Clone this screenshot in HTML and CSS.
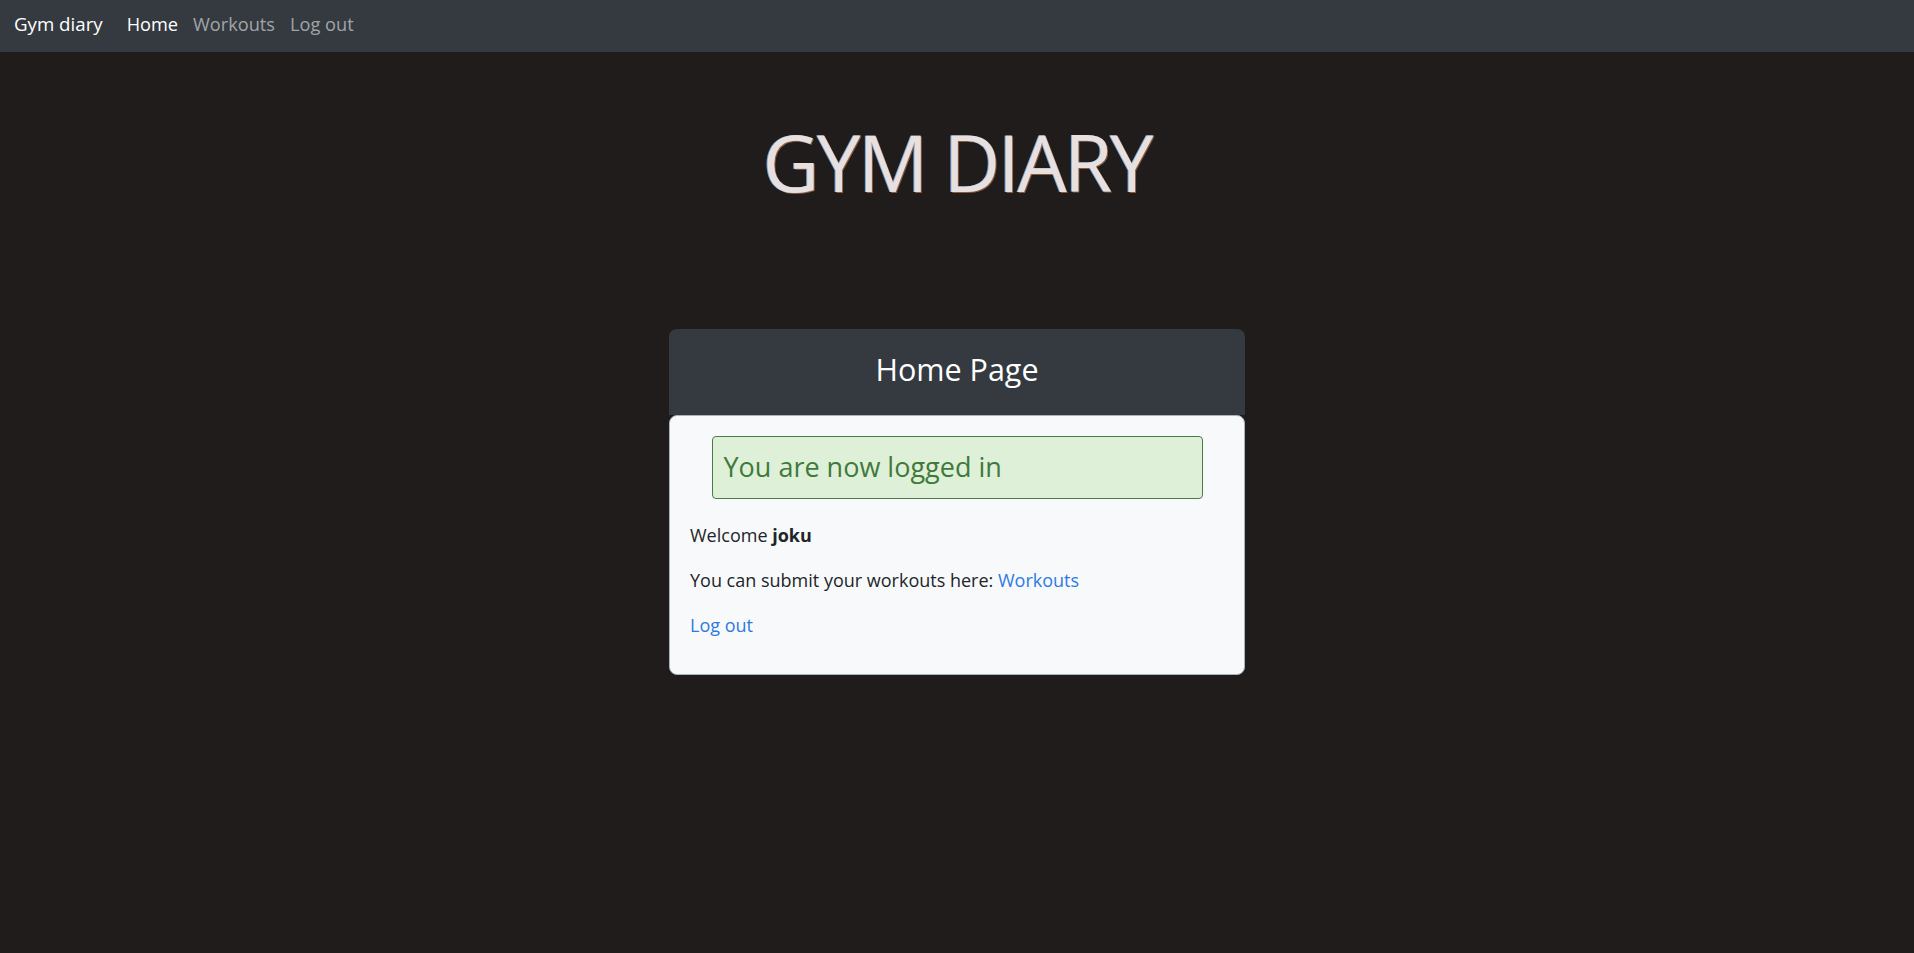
FILE: index.html
```html
<!DOCTYPE html>
<html lang="en">
<head>
<meta charset="utf-8">
<title>Gym diary</title>
<link rel="stylesheet" href="styles.css">
</head>
<body>
<nav class="navbar">
  <a class="brand" href="#">Gym diary</a>
  <div class="nav-links">
    <a class="nav-link active" href="#">Home</a>
    <a class="nav-link" href="#">Workouts</a>
    <a class="nav-link" href="#">Log out</a>
  </div>
</nav>
<main class="main">
  <h1 class="title">GYM DIARY</h1>
  <section class="card">
    <header class="card-header">
      <h2 class="card-title">Home Page</h2>
    </header>
    <div class="card-body">
      <div class="alert">You are now logged in</div>
      <p class="line">Welcome <strong>joku</strong></p>
      <p class="line">You can submit your workouts here: <a href="#" class="link">Workouts</a></p>
      <p class="line"><a href="#" class="link">Log out</a></p>
    </div>
  </section>
</main>
</body>
</html>
```

FILE: styles.css
```css
* { box-sizing: border-box; }
html, body { margin: 0; padding: 0; }
body {
  background: #201c1b;
  font-family: "Open Sans", "Noto Sans", sans-serif;
  color: #212529;
  min-height: 953px;
}
a { text-decoration: none; }

.navbar {
  height: 52px;
  background: #343a40;
  display: flex;
  align-items: center;
  padding: 0 14px 5px;
}
.brand {
  color: #fff;
  font-size: 18.7px;
  margin-right: 24px;
}
.nav-links { display: flex; gap: 15px; }
.nav-link {
  color: rgba(255,255,255,0.55);
  font-size: 18.2px;
}
.nav-link.active { color: #fff; }

.main {
  display: flex;
  flex-direction: column;
  align-items: center;
}
.title {
  margin: 60px 0 0;
  font-size: 78px;
  font-weight: 400;
  line-height: 100px;
  height: 108px;
  color: #e8dfdf;
  text-shadow: -1px 0 0 #6aa0d8, 1px 1px 0 #8a5a3c;
  letter-spacing: -2.4px;
}
.card {
  margin-top: 109px;
  width: 576px;
  display: flex;
  flex-direction: column;
}
.card-header {
  background: #343a40;
  height: 86px;
  border-radius: 8px 8px 0 0;
  display: flex;
  align-items: center;
  justify-content: center;
}
.card-title {
  margin: 0;
  font-size: 30.5px;
  font-weight: 400;
  color: #fff;
  padding-bottom: 6px;
}
.card-body {
  background: #f8f9fa;
  border: 1px solid #aab2bb;
  border-radius: 8px;
  padding: 20px 20px 26px;
  display: flex;
  flex-direction: column;
}
.alert {
  align-self: center;
  width: 491px;
  height: 63px;
  margin: 0 0 14px;
  background: #dff0d8;
  border: 1px solid #4b7a48;
  border-radius: 4px;
  color: #3f7a3c;
  font-size: 27px;
  display: flex;
  align-items: center;
  padding: 0 11px 3px;
}
.line {
  margin: 0;
  font-size: 18px;
  line-height: 45px;
}
.line strong { font-weight: 700; }
.link { color: #2c7be5; }
```
